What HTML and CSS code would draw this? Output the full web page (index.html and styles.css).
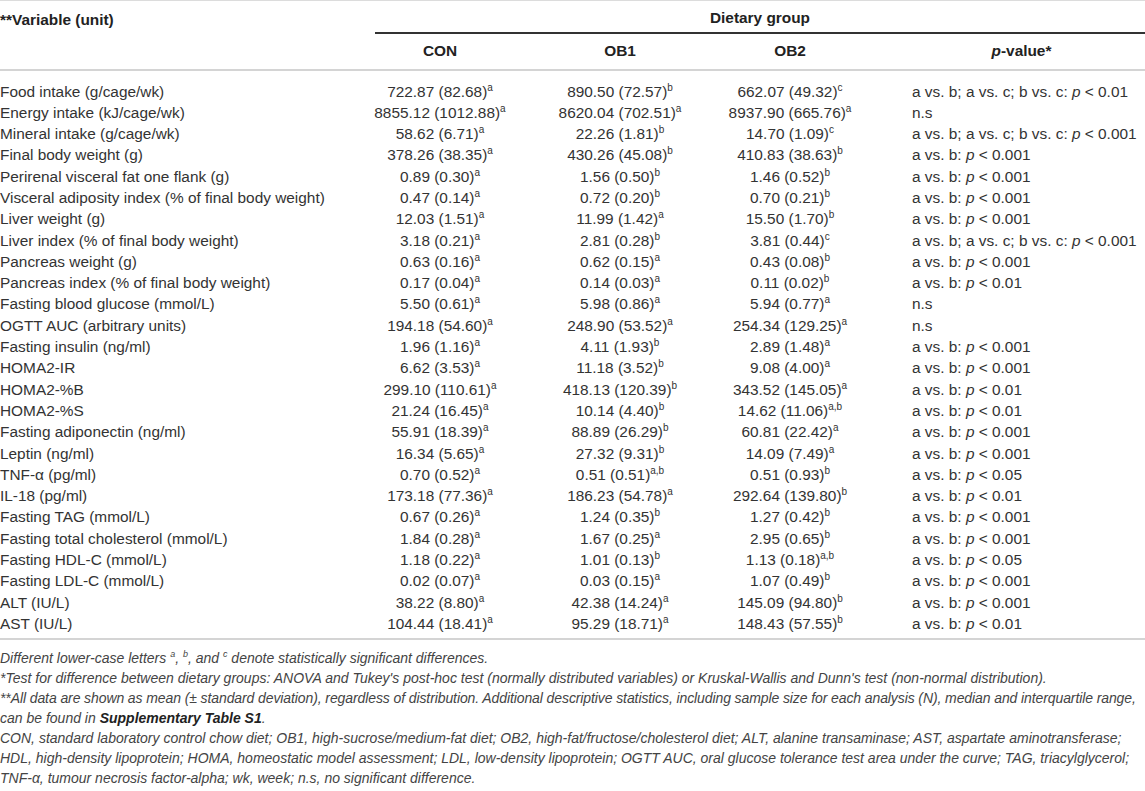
FILE: index.html
```html
<!DOCTYPE html>
<html lang="en">
<head>
    <meta charset="UTF-8">
    <meta name="viewport" content="width=device-width, initial-scale=1.0">
    <title>Table</title>
    <link rel="stylesheet" href="styles.css">
</head>
<body>
    <table class="data">
        <colgroup>
            <col class="c-var">
            <col class="c-con">
            <col class="c-ob1">
            <col class="c-ob2">
            <col class="c-p">
        </colgroup>
        <thead>
            <tr class="head-top">
                <th class="var">**Variable (unit)</th>
                <th colspan="4" class="group"><div class="group-line">Dietary group</div></th>
            </tr>
            <tr class="head-sub">
                <th></th>
                <th>CON</th>
                <th class="ob1">OB1</th>
                <th>OB2</th>
                <th class="pv"><i>p</i>-value*</th>
            </tr>
        </thead>
        <tbody>
            <tr><td>Food intake (g/cage/wk)</td><td>722.87 (82.68)<sup>a</sup></td><td>890.50 (72.57)<sup>b</sup></td><td>662.07 (49.32)<sup>c</sup></td><td>a vs. b; a vs. c; b vs. c: <i>p</i> &lt; 0.01</td></tr>
            <tr><td>Energy intake (kJ/cage/wk)</td><td>8855.12 (1012.88)<sup>a</sup></td><td>8620.04 (702.51)<sup>a</sup></td><td>8937.90 (665.76)<sup>a</sup></td><td>n.s</td></tr>
            <tr><td>Mineral intake (g/cage/wk)</td><td>58.62 (6.71)<sup>a</sup></td><td>22.26 (1.81)<sup>b</sup></td><td>14.70 (1.09)<sup>c</sup></td><td>a vs. b; a vs. c; b vs. c: <i>p</i> &lt; 0.001</td></tr>
            <tr><td>Final body weight (g)</td><td>378.26 (38.35)<sup>a</sup></td><td>430.26 (45.08)<sup>b</sup></td><td>410.83 (38.63)<sup>b</sup></td><td>a vs. b: <i>p</i> &lt; 0.001</td></tr>
            <tr><td>Perirenal visceral fat one flank (g)</td><td>0.89 (0.30)<sup>a</sup></td><td>1.56 (0.50)<sup>b</sup></td><td>1.46 (0.52)<sup>b</sup></td><td>a vs. b: <i>p</i> &lt; 0.001</td></tr>
            <tr><td>Visceral adiposity index (% of final body weight)</td><td>0.47 (0.14)<sup>a</sup></td><td>0.72 (0.20)<sup>b</sup></td><td>0.70 (0.21)<sup>b</sup></td><td>a vs. b: <i>p</i> &lt; 0.001</td></tr>
            <tr><td>Liver weight (g)</td><td>12.03 (1.51)<sup>a</sup></td><td>11.99 (1.42)<sup>a</sup></td><td>15.50 (1.70)<sup>b</sup></td><td>a vs. b: <i>p</i> &lt; 0.001</td></tr>
            <tr><td>Liver index (% of final body weight)</td><td>3.18 (0.21)<sup>a</sup></td><td>2.81 (0.28)<sup>b</sup></td><td>3.81 (0.44)<sup>c</sup></td><td>a vs. b; a vs. c; b vs. c: <i>p</i> &lt; 0.001</td></tr>
            <tr><td>Pancreas weight (g)</td><td>0.63 (0.16)<sup>a</sup></td><td>0.62 (0.15)<sup>a</sup></td><td>0.43 (0.08)<sup>b</sup></td><td>a vs. b: <i>p</i> &lt; 0.001</td></tr>
            <tr><td>Pancreas index (% of final body weight)</td><td>0.17 (0.04)<sup>a</sup></td><td>0.14 (0.03)<sup>a</sup></td><td>0.11 (0.02)<sup>b</sup></td><td>a vs. b: <i>p</i> &lt; 0.01</td></tr>
            <tr><td>Fasting blood glucose (mmol/L)</td><td>5.50 (0.61)<sup>a</sup></td><td>5.98 (0.86)<sup>a</sup></td><td>5.94 (0.77)<sup>a</sup></td><td>n.s</td></tr>
            <tr><td>OGTT AUC (arbitrary units)</td><td>194.18 (54.60)<sup>a</sup></td><td>248.90 (53.52)<sup>a</sup></td><td>254.34 (129.25)<sup>a</sup></td><td>n.s</td></tr>
            <tr><td>Fasting insulin (ng/ml)</td><td>1.96 (1.16)<sup>a</sup></td><td>4.11 (1.93)<sup>b</sup></td><td>2.89 (1.48)<sup>a</sup></td><td>a vs. b: <i>p</i> &lt; 0.001</td></tr>
            <tr><td>HOMA2-IR</td><td>6.62 (3.53)<sup>a</sup></td><td>11.18 (3.52)<sup>b</sup></td><td>9.08 (4.00)<sup>a</sup></td><td>a vs. b: <i>p</i> &lt; 0.001</td></tr>
            <tr><td>HOMA2-%B</td><td>299.10 (110.61)<sup>a</sup></td><td>418.13 (120.39)<sup>b</sup></td><td>343.52 (145.05)<sup>a</sup></td><td>a vs. b: <i>p</i> &lt; 0.01</td></tr>
            <tr><td>HOMA2-%S</td><td>21.24 (16.45)<sup>a</sup></td><td>10.14 (4.40)<sup>b</sup></td><td>14.62 (11.06)<sup>a,b</sup></td><td>a vs. b: <i>p</i> &lt; 0.01</td></tr>
            <tr><td>Fasting adiponectin (ng/ml)</td><td>55.91 (18.39)<sup>a</sup></td><td>88.89 (26.29)<sup>b</sup></td><td>60.81 (22.42)<sup>a</sup></td><td>a vs. b: <i>p</i> &lt; 0.001</td></tr>
            <tr><td>Leptin (ng/ml)</td><td>16.34 (5.65)<sup>a</sup></td><td>27.32 (9.31)<sup>b</sup></td><td>14.09 (7.49)<sup>a</sup></td><td>a vs. b: <i>p</i> &lt; 0.001</td></tr>
            <tr><td>TNF-α (pg/ml)</td><td>0.70 (0.52)<sup>a</sup></td><td>0.51 (0.51)<sup>a,b</sup></td><td>0.51 (0.93)<sup>b</sup></td><td>a vs. b: <i>p</i> &lt; 0.05</td></tr>
            <tr><td>IL-18 (pg/ml)</td><td>173.18 (77.36)<sup>a</sup></td><td>186.23 (54.78)<sup>a</sup></td><td>292.64 (139.80)<sup>b</sup></td><td>a vs. b: <i>p</i> &lt; 0.01</td></tr>
            <tr><td>Fasting TAG (mmol/L)</td><td>0.67 (0.26)<sup>a</sup></td><td>1.24 (0.35)<sup>b</sup></td><td>1.27 (0.42)<sup>b</sup></td><td>a vs. b: <i>p</i> &lt; 0.001</td></tr>
            <tr><td>Fasting total cholesterol (mmol/L)</td><td>1.84 (0.28)<sup>a</sup></td><td>1.67 (0.25)<sup>a</sup></td><td>2.95 (0.65)<sup>b</sup></td><td>a vs. b: <i>p</i> &lt; 0.001</td></tr>
            <tr><td>Fasting HDL-C (mmol/L)</td><td>1.18 (0.22)<sup>a</sup></td><td>1.01 (0.13)<sup>b</sup></td><td>1.13 (0.18)<sup>a,b</sup></td><td>a vs. b: <i>p</i> &lt; 0.05</td></tr>
            <tr><td>Fasting LDL-C (mmol/L)</td><td>0.02 (0.07)<sup>a</sup></td><td>0.03 (0.15)<sup>a</sup></td><td>1.07 (0.49)<sup>b</sup></td><td>a vs. b: <i>p</i> &lt; 0.001</td></tr>
            <tr><td>ALT (IU/L)</td><td>38.22 (8.80)<sup>a</sup></td><td>42.38 (14.24)<sup>a</sup></td><td>145.09 (94.80)<sup>b</sup></td><td>a vs. b: <i>p</i> &lt; 0.001</td></tr>
            <tr><td>AST (IU/L)</td><td>104.44 (18.41)<sup>a</sup></td><td>95.29 (18.71)<sup>a</sup></td><td>148.43 (57.55)<sup>b</sup></td><td>a vs. b: <i>p</i> &lt; 0.01</td></tr>
        </tbody>
    </table>
    <div class="notes">
        <p>Different lower-case letters <sup>a</sup>, <sup>b</sup>, and <sup>c</sup> denote statistically significant differences.</p>
        <p>*Test for difference between dietary groups: ANOVA and Tukey's post-hoc test (normally distributed variables) or Kruskal-Wallis and Dunn's test (non-normal distribution).</p>
        <p class="tight">**All data are shown as mean (± standard deviation), regardless of distribution. Additional descriptive statistics, including sample size for each analysis (N), median and interquartile range,</p>
        <p>can be found in <b>Supplementary Table S1</b>.</p>
        <p>CON, standard laboratory control chow diet; OB1, high-sucrose/medium-fat diet; OB2, high-fat/fructose/cholesterol diet; ALT, alanine transaminase; AST, aspartate aminotransferase;</p>
        <p>HDL, high-density lipoprotein; HOMA, homeostatic model assessment; LDL, low-density lipoprotein; OGTT AUC, oral glucose tolerance test area under the curve; TAG, triacylglycerol;</p>
        <p>TNF-α, tumour necrosis factor-alpha; wk, week; n.s, no significant difference.</p>
    </div>
</body>
</html>
```

FILE: styles.css
```css
*{
    margin:0;
    padding:0;
    box-sizing: border-box;
}
body{
    background-color: #fff;
    color: #333;
    font-family: "Liberation Sans", Arial, sans-serif;
    font-size: 15.4px;
    width: 1145px;
}

.data{
    width: 1145px;
    border-collapse: collapse;
    table-layout: fixed;
    border-top: 1px solid #dcdcdc;
    border-bottom: 2px solid #d4d4d4;
}
.c-var{ width: 360px; }
.c-con{ width: 160px; }
.c-ob1{ width: 180px; }
.c-ob2{ width: 180px; }
.c-p{ width: 265px; }

th{
    color: #222;
    font-weight: bold;
    text-align: center;
}
.head-top th{
    height: 33px;
    vertical-align: bottom;
}
.head-top .var{
    text-align: left;
    vertical-align: top;
    padding-top: 10px;
}
.group-line{
    margin-left: 15px;
    border-bottom: 2px solid #333;
    padding-bottom: 5px;
}
.head-sub th{
    height: 36px;
    border-bottom: 2px solid #d4d4d4;
}
.head-sub .ob1{
    padding-left: 20px;
}
.head-sub .pv{
    padding-left: 18px;
}

td{
    line-height: 21.3px;
    white-space: nowrap;
    text-align: center;
}
td:first-child{
    text-align: left;
}
td:nth-child(3){
    padding-left: 20px;
}
td:last-child{
    text-align: left;
    padding-left: 32px;
}
tbody tr:first-child td{
    padding-top: 10px;
}
tbody tr:last-child td{
    padding-bottom: 4px;
}
sup{
    font-size: 10px;
    line-height: 0;
    vertical-align: 6px;
}

.notes{
    padding-top: 8px;
    font-style: italic;
    font-size: 14px;
    color: #444;
}
.notes p{
    line-height: 20px;
    white-space: nowrap;
}
.notes sup{
    font-size: 9px;
}
.tight{
    letter-spacing: -0.1px;
}
.notes b{
    color: #222;
}
```
